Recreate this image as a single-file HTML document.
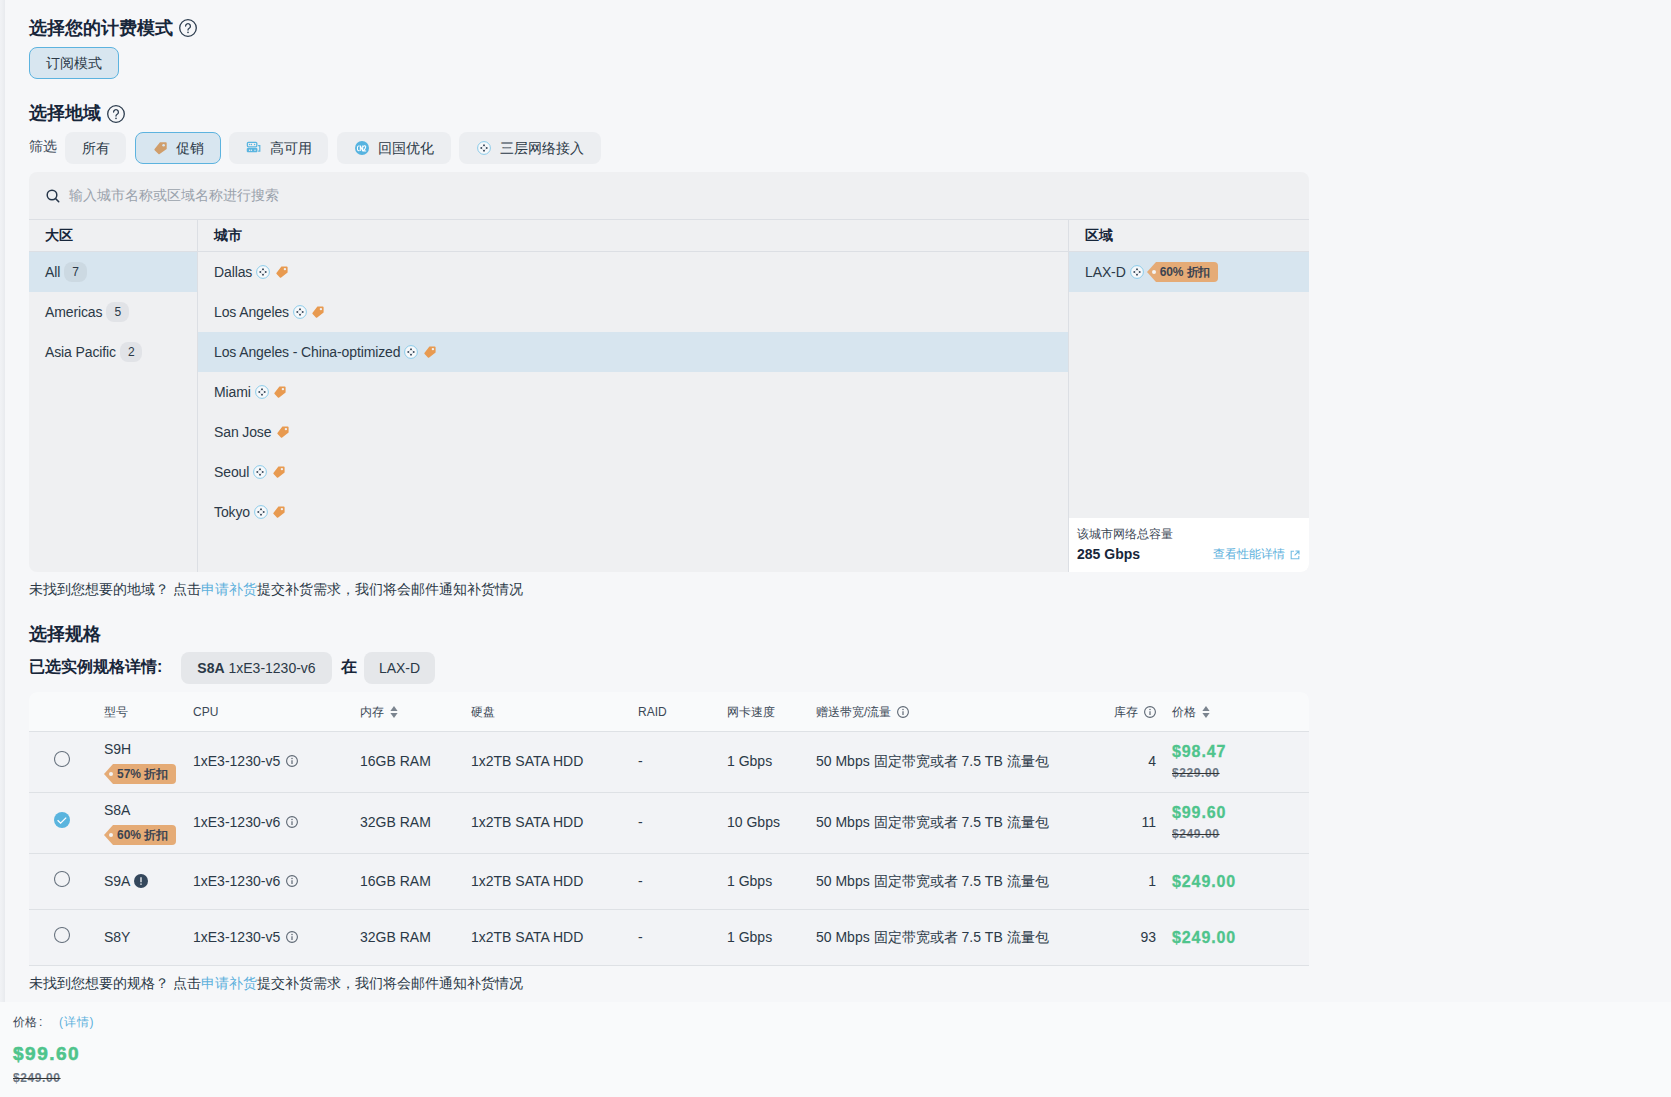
<!DOCTYPE html>
<html><head><meta charset="utf-8">
<style>
*{box-sizing:border-box;margin:0;padding:0}
html,body{width:1671px;height:1097px;overflow:hidden}
body{background:#f6f7f9;font-family:"Liberation Sans",sans-serif;color:#2b3947;position:relative;font-size:14px}
.abs{position:absolute}
.strip{left:0;top:0;width:5px;height:1002px;background:linear-gradient(to right,#f1f2f5,#eef0f3 40%,#e8eaee)}
.h{font-size:18px;font-weight:bold;color:#17263a;line-height:24px;white-space:nowrap}
.help{display:inline-block;vertical-align:top}
.btn{position:absolute;height:32px;border-radius:8px;background:#eceef1;line-height:32px;font-size:14px;color:#2b3947;white-space:nowrap}
.btn.sel{background:#d8e6f0;border:1px solid #5cb3df;line-height:30px}
.btn svg{position:absolute}
.panel{left:29px;top:172px;width:1280px;height:400px;background:#eff0f2;border-radius:8px;overflow:hidden}
.row{position:absolute;height:40px;line-height:40px;white-space:nowrap;letter-spacing:-.12px}
.sel-bg{background:#d7e5ef}
.badge{display:inline-block;height:20px;line-height:20px;border-radius:8px;background:#e1e3e7;padding:0 8px;font-size:12px;vertical-align:middle;margin-left:4px;position:relative;top:-1px}
.sel-bg .badge{background:#ccd9e2}
.hd{font-size:14px;font-weight:bold;line-height:20px;color:#17263a}
.row .ni{vertical-align:middle;margin-left:4px;position:relative;top:-1px}
.row .ti{vertical-align:middle;margin-left:5.5px;position:relative;top:-1px}
.dtag{display:inline-block;position:relative;height:20px;line-height:20px;background:#e5ab76;color:#3b4350;font-size:12px;font-weight:bold;padding:0 8px 0 4px;border-radius:0 4px 4px 0;margin-left:12px;vertical-align:middle;top:-1px}
.dtag:before{content:"";position:absolute;left:-9px;top:0;border-right:9px solid #e5ab76;border-top:10px solid transparent;border-bottom:10px solid transparent}
.dtag:after{content:"";position:absolute;left:-4px;top:8px;width:4px;height:4px;border-radius:50%;background:#f4f4f4}
.foot{font-size:14px;line-height:20px;color:#2b3947;white-space:nowrap}
.lnk{color:#5cb0dc}
.chip{height:32px;line-height:32px;border-radius:8px;background:#e5e7ea;text-align:center;font-size:14px;color:#2b3947;white-space:nowrap}
.chip b{color:#2b3947}
.tbl{left:29px;top:692px;width:1280px;height:274px;background:#f2f3f6;border-radius:8px 8px 0 0;overflow:hidden}
.th{top:10px;font-size:12px;line-height:20px;color:#3b4856;white-space:nowrap}
.th svg{vertical-align:middle;margin-left:6px;position:relative;top:-1px}
.cell{font-size:14px;line-height:20px;color:#2b3947;white-space:nowrap}
.cell .ii{vertical-align:middle;margin-left:6px;position:relative;top:-1px}
.cell .ei{vertical-align:middle;margin-left:4px;position:relative;top:-1px}
.price{font-size:16px;font-weight:bold;line-height:20px;color:#4fc48c;white-space:nowrap;letter-spacing:.9px;-webkit-text-stroke:.3px #4fc48c}
.old{font-size:12px;font-weight:bold;line-height:16px;color:#6b7683;text-decoration:line-through;text-decoration-color:#333;white-space:nowrap;letter-spacing:.6px}
.bar{left:0;top:1002px;width:1671px;height:95px;background:#f9fafb}
</style></head><body>
<div class="abs strip"></div>

<div class="abs h" style="left:29px;top:16px">选择您的计费模式</div>
<svg class="abs" style="left:179px;top:19px" width="18" height="18" viewBox="0 0 18 18"><circle cx="9" cy="9" r="8.3" fill="none" stroke="#2c3c4e" stroke-width="1.3"/><path d="M6.6 7.1a2.4 2.4 0 1 1 3.6 2.1c-.8.5-1.2.9-1.2 1.9" fill="none" stroke="#2c3c4e" stroke-width="1.3" stroke-linecap="round"/><circle cx="9" cy="13.4" r=".8" fill="#2c3c4e"/></svg>
<div class="btn sel" style="left:29px;top:47px;width:90px;text-align:center">订阅模式</div>

<div class="abs h" style="left:29px;top:101px">选择地域</div>
<svg class="abs" style="left:107px;top:105px" width="18" height="18" viewBox="0 0 18 18"><circle cx="9" cy="9" r="8.3" fill="none" stroke="#2c3c4e" stroke-width="1.3"/><path d="M6.6 7.1a2.4 2.4 0 1 1 3.6 2.1c-.8.5-1.2.9-1.2 1.9" fill="none" stroke="#2c3c4e" stroke-width="1.3" stroke-linecap="round"/><circle cx="9" cy="13.4" r=".8" fill="#2c3c4e"/></svg>

<div class="abs" style="left:29px;top:136px;line-height:20px;font-size:14px;color:#3a4756">筛选</div>
<div class="btn" style="left:65px;top:132px;width:61px;text-align:center">所有</div>
<div class="btn sel" style="left:135px;top:132px;width:86px;padding-left:40px">促销
<svg style="left:18px;top:9px" width="13" height="13" viewBox="0 0 13 13"><path d="M6 .3h5.9c.5 0 .8.3.8.8v5.9L5.6 12.1c-.3.3-.8.3-1.1 0L.6 8.2c-.3-.3-.3-.8 0-1.1z" fill="#d09e6b"/><circle cx="9.6" cy="3.2" r="1.3" fill="#d8e6f0"/></svg></div>
<div class="btn" style="left:229px;top:132px;width:99px;padding-left:41px">高可用
<svg style="left:17px;top:9px" width="15" height="13" viewBox="0 0 15 13"><rect x="1.4" y="1.3" width="9.4" height="4.5" rx="1" fill="none" stroke="#5ab5e0" stroke-width="1.3"/><circle cx="3.6" cy="3.55" r=".7" fill="#5ab5e0"/><circle cx="5.4" cy="3.55" r=".7" fill="#5ab5e0"/><circle cx="8.6" cy="3.55" r=".7" fill="#5ab5e0"/><rect x=".75" y="7.1" width="10.7" height="4.2" rx="1" fill="#5ab5e0"/><circle cx="3.6" cy="9.2" r=".7" fill="#eceef1"/><circle cx="5.4" cy="9.2" r=".7" fill="#eceef1"/><circle cx="9" cy="9.2" r=".7" fill="#eceef1"/><path d="M12.1 4.6h1.7v5.6h-1.7" fill="none" stroke="#5ab5e0" stroke-width="1.2"/></svg></div>
<div class="btn" style="left:337px;top:132px;width:114px;padding-left:41px">回国优化
<svg style="left:18px;top:9px" width="14" height="14" viewBox="0 0 14 14"><circle cx="7" cy="7" r="7" fill="#56b3e0"/><path d="M4.4 5.1Q2.4 4.3 2.4 7.3Q2.4 10.3 4.4 9.5M5.3 10V4.6L7.7 10V4.6M8.5 5.6Q9.5 4.2 10.6 5.2Q11.3 6.2 8.5 9.9H11.2" fill="none" stroke="#fff" stroke-width="1.05"/></svg></div>
<div class="btn" style="left:459px;top:132px;width:142px;padding-left:41px">三层网络接入
<svg style="left:18px;top:9px" width="14" height="14" viewBox="0 0 14 14"><circle cx="7" cy="7" r="6.4" fill="#f6f8fa" stroke="#8acbea" stroke-width="1"/><path d="M7 4.3L9.7 7 7 9.7 4.3 7z" fill="none" stroke="#aab2bc" stroke-width=".5"/><rect x="6.2" y="3.5" width="1.6" height="1.6" fill="#27384d"/><rect x="6.2" y="8.9" width="1.6" height="1.6" fill="#27384d"/><rect x="3.5" y="6.2" width="1.6" height="1.6" fill="#27384d"/><rect x="8.9" y="6.2" width="1.6" height="1.6" fill="#27384d"/></svg></div>

<div class="abs panel">
<svg class="abs" style="left:17px;top:17px" width="14" height="14" viewBox="0 0 14 14"><circle cx="6" cy="6" r="4.8" fill="none" stroke="#26364a" stroke-width="1.5"/><path d="M9.5 9.5l3.2 3.2" stroke="#26364a" stroke-width="1.6" stroke-linecap="round"/></svg>
<div class="abs" style="left:40px;top:13px;line-height:20px;font-size:14px;color:#9aa2ac">输入城市名称或区域名称进行搜索</div>
<div class="abs" style="left:0;top:47px;width:1280px;height:1px;background:#dcdfe4"></div>
<div class="abs" style="left:168px;top:48px;width:1px;height:352px;background:#dcdfe4"></div>
<div class="abs" style="left:1039px;top:48px;width:1px;height:352px;background:#dcdfe4"></div>
<div class="abs" style="left:0;top:79px;width:1280px;height:1px;background:#dcdfe4"></div>
<div class="abs hd" style="left:16px;top:53px">大区</div>
<div class="abs hd" style="left:185px;top:53px">城市</div>
<div class="abs hd" style="left:1056px;top:53px">区域</div>
<div class="row sel-bg" style="left:0;top:80px;width:168px;padding-left:16px">All<span class="badge">7</span></div>
<div class="row" style="left:0;top:120px;width:168px;padding-left:16px">Americas<span class="badge">5</span></div>
<div class="row" style="left:0;top:160px;width:168px;padding-left:16px">Asia Pacific<span class="badge">2</span></div>
<div class="row" style="left:169px;top:80px;width:870px;padding-left:16px">Dallas<svg class="ni" width="14" height="14" viewBox="0 0 14 14"><circle cx="7" cy="7" r="6.4" fill="#f6f8fa" stroke="#8acbea" stroke-width="1"/><path d="M7 4.3L9.7 7 7 9.7 4.3 7z" fill="none" stroke="#aab2bc" stroke-width=".5"/><rect x="6.2" y="3.5" width="1.6" height="1.6" fill="#27384d"/><rect x="6.2" y="8.9" width="1.6" height="1.6" fill="#27384d"/><rect x="3.5" y="6.2" width="1.6" height="1.6" fill="#27384d"/><rect x="8.9" y="6.2" width="1.6" height="1.6" fill="#27384d"/></svg><svg class="ti" width="12" height="12" viewBox="0 0 12 12"><path d="M5.4.4h5.3c.5 0 .9.4.9.9v5.3L5.2 11.4c-.4.4-.9.4-1.3 0L.6 8.1c-.4-.4-.4-.9 0-1.3z" fill="#e89a50"/><circle cx="8.9" cy="3.1" r="1.2" fill="#eff0f2"/></svg></div>
<div class="row" style="left:169px;top:120px;width:870px;padding-left:16px">Los Angeles<svg class="ni" width="14" height="14" viewBox="0 0 14 14"><circle cx="7" cy="7" r="6.4" fill="#f6f8fa" stroke="#8acbea" stroke-width="1"/><path d="M7 4.3L9.7 7 7 9.7 4.3 7z" fill="none" stroke="#aab2bc" stroke-width=".5"/><rect x="6.2" y="3.5" width="1.6" height="1.6" fill="#27384d"/><rect x="6.2" y="8.9" width="1.6" height="1.6" fill="#27384d"/><rect x="3.5" y="6.2" width="1.6" height="1.6" fill="#27384d"/><rect x="8.9" y="6.2" width="1.6" height="1.6" fill="#27384d"/></svg><svg class="ti" width="12" height="12" viewBox="0 0 12 12"><path d="M5.4.4h5.3c.5 0 .9.4.9.9v5.3L5.2 11.4c-.4.4-.9.4-1.3 0L.6 8.1c-.4-.4-.4-.9 0-1.3z" fill="#e89a50"/><circle cx="8.9" cy="3.1" r="1.2" fill="#eff0f2"/></svg></div>
<div class="row sel-bg" style="left:169px;top:160px;width:870px;padding-left:16px">Los Angeles - China-optimized<svg class="ni" width="14" height="14" viewBox="0 0 14 14"><circle cx="7" cy="7" r="6.4" fill="#f6f8fa" stroke="#8acbea" stroke-width="1"/><path d="M7 4.3L9.7 7 7 9.7 4.3 7z" fill="none" stroke="#aab2bc" stroke-width=".5"/><rect x="6.2" y="3.5" width="1.6" height="1.6" fill="#27384d"/><rect x="6.2" y="8.9" width="1.6" height="1.6" fill="#27384d"/><rect x="3.5" y="6.2" width="1.6" height="1.6" fill="#27384d"/><rect x="8.9" y="6.2" width="1.6" height="1.6" fill="#27384d"/></svg><svg class="ti" width="12" height="12" viewBox="0 0 12 12"><path d="M5.4.4h5.3c.5 0 .9.4.9.9v5.3L5.2 11.4c-.4.4-.9.4-1.3 0L.6 8.1c-.4-.4-.4-.9 0-1.3z" fill="#e89a50"/><circle cx="8.9" cy="3.1" r="1.2" fill="#eff0f2"/></svg></div>
<div class="row" style="left:169px;top:200px;width:870px;padding-left:16px">Miami<svg class="ni" width="14" height="14" viewBox="0 0 14 14"><circle cx="7" cy="7" r="6.4" fill="#f6f8fa" stroke="#8acbea" stroke-width="1"/><path d="M7 4.3L9.7 7 7 9.7 4.3 7z" fill="none" stroke="#aab2bc" stroke-width=".5"/><rect x="6.2" y="3.5" width="1.6" height="1.6" fill="#27384d"/><rect x="6.2" y="8.9" width="1.6" height="1.6" fill="#27384d"/><rect x="3.5" y="6.2" width="1.6" height="1.6" fill="#27384d"/><rect x="8.9" y="6.2" width="1.6" height="1.6" fill="#27384d"/></svg><svg class="ti" width="12" height="12" viewBox="0 0 12 12"><path d="M5.4.4h5.3c.5 0 .9.4.9.9v5.3L5.2 11.4c-.4.4-.9.4-1.3 0L.6 8.1c-.4-.4-.4-.9 0-1.3z" fill="#e89a50"/><circle cx="8.9" cy="3.1" r="1.2" fill="#eff0f2"/></svg></div>
<div class="row" style="left:169px;top:240px;width:870px;padding-left:16px">San Jose<svg class="ti" width="12" height="12" viewBox="0 0 12 12"><path d="M5.4.4h5.3c.5 0 .9.4.9.9v5.3L5.2 11.4c-.4.4-.9.4-1.3 0L.6 8.1c-.4-.4-.4-.9 0-1.3z" fill="#e89a50"/><circle cx="8.9" cy="3.1" r="1.2" fill="#eff0f2"/></svg></div>
<div class="row" style="left:169px;top:280px;width:870px;padding-left:16px">Seoul<svg class="ni" width="14" height="14" viewBox="0 0 14 14"><circle cx="7" cy="7" r="6.4" fill="#f6f8fa" stroke="#8acbea" stroke-width="1"/><path d="M7 4.3L9.7 7 7 9.7 4.3 7z" fill="none" stroke="#aab2bc" stroke-width=".5"/><rect x="6.2" y="3.5" width="1.6" height="1.6" fill="#27384d"/><rect x="6.2" y="8.9" width="1.6" height="1.6" fill="#27384d"/><rect x="3.5" y="6.2" width="1.6" height="1.6" fill="#27384d"/><rect x="8.9" y="6.2" width="1.6" height="1.6" fill="#27384d"/></svg><svg class="ti" width="12" height="12" viewBox="0 0 12 12"><path d="M5.4.4h5.3c.5 0 .9.4.9.9v5.3L5.2 11.4c-.4.4-.9.4-1.3 0L.6 8.1c-.4-.4-.4-.9 0-1.3z" fill="#e89a50"/><circle cx="8.9" cy="3.1" r="1.2" fill="#eff0f2"/></svg></div>
<div class="row" style="left:169px;top:320px;width:870px;padding-left:16px">Tokyo<svg class="ni" width="14" height="14" viewBox="0 0 14 14"><circle cx="7" cy="7" r="6.4" fill="#f6f8fa" stroke="#8acbea" stroke-width="1"/><path d="M7 4.3L9.7 7 7 9.7 4.3 7z" fill="none" stroke="#aab2bc" stroke-width=".5"/><rect x="6.2" y="3.5" width="1.6" height="1.6" fill="#27384d"/><rect x="6.2" y="8.9" width="1.6" height="1.6" fill="#27384d"/><rect x="3.5" y="6.2" width="1.6" height="1.6" fill="#27384d"/><rect x="8.9" y="6.2" width="1.6" height="1.6" fill="#27384d"/></svg><svg class="ti" width="12" height="12" viewBox="0 0 12 12"><path d="M5.4.4h5.3c.5 0 .9.4.9.9v5.3L5.2 11.4c-.4.4-.9.4-1.3 0L.6 8.1c-.4-.4-.4-.9 0-1.3z" fill="#e89a50"/><circle cx="8.9" cy="3.1" r="1.2" fill="#eff0f2"/></svg></div>

<div class="row sel-bg" style="left:1040px;top:80px;width:240px;padding-left:16px">LAX-D<svg class="ni" width="14" height="14" viewBox="0 0 14 14"><circle cx="7" cy="7" r="6.4" fill="#f6f8fa" stroke="#8acbea" stroke-width="1"/><path d="M7 4.3L9.7 7 7 9.7 4.3 7z" fill="none" stroke="#aab2bc" stroke-width=".5"/><rect x="6.2" y="3.5" width="1.6" height="1.6" fill="#27384d"/><rect x="6.2" y="8.9" width="1.6" height="1.6" fill="#27384d"/><rect x="3.5" y="6.2" width="1.6" height="1.6" fill="#27384d"/><rect x="8.9" y="6.2" width="1.6" height="1.6" fill="#27384d"/></svg><span class="dtag">60% 折扣</span></div>
<div class="abs" style="left:1040px;top:346px;width:240px;height:54px;background:#fff">
<div class="abs" style="left:8px;top:8px;font-size:12px;line-height:16px;color:#3a4654">该城市网络总容量</div>
<div class="abs" style="left:8px;top:27px;font-size:14px;font-weight:bold;line-height:18px;color:#17263a">285 Gbps</div>
<div class="abs" style="left:144px;top:28px;font-size:12px;line-height:16px;color:#5cb0dc;white-space:nowrap">查看性能详情</div>
<svg class="abs" style="left:221px;top:32px" width="10" height="10" viewBox="0 0 10 10"><path d="M4 1.2H1.2v7.6h7.6V6" fill="none" stroke="#74bde3" stroke-width="1.1"/><path d="M5.5 1h3.5v3.5M9 1L4.6 5.4" fill="none" stroke="#74bde3" stroke-width="1.1"/></svg>
</div>
</div>


<div class="abs foot" style="left:29px;top:579px">未找到您想要的地域？ 点击<span class="lnk">申请补货</span>提交补货需求，我们将会邮件通知补货情况</div>
<div class="abs h" style="left:29px;top:622px">选择规格</div>
<div class="abs" style="left:29px;top:655px;font-size:16px;font-weight:bold;line-height:24px;color:#17263a">已选实例规格详情:</div>
<div class="abs chip" style="left:181px;top:652px;width:151px"><b>S8A</b> 1xE3-1230-v6</div>
<div class="abs" style="left:341px;top:655px;font-size:16px;font-weight:bold;line-height:24px;color:#17263a">在</div>
<div class="abs chip" style="left:364px;top:652px;width:71px">LAX-D</div>
<div class="abs tbl">
<div class="abs" style="left:0;top:0;width:1280px;height:39px;background:#f9fafb"></div>
<div class="abs" style="left:0;top:39px;width:1280px;height:1px;background:#dee1e5"></div>
<div class="abs th" style="left:75px">型号</div>
<div class="abs th" style="left:164px">CPU</div>
<div class="abs th" style="left:331px">内存<svg class="si" width="8" height="14" viewBox="0 0 8 14"><path d="M4 1L7.6 6H.4z" fill="#7b848f"/><path d="M4 13L7.6 8H.4z" fill="#7b848f"/></svg></div>
<div class="abs th" style="left:442px">硬盘</div>
<div class="abs th" style="left:609px">RAID</div>
<div class="abs th" style="left:698px">网卡速度</div>
<div class="abs th" style="left:787px">赠送带宽/流量<svg class="ii" width="12" height="12" viewBox="0 0 12 12"><circle cx="6" cy="6" r="5.4" fill="none" stroke="#5d6773" stroke-width="1.1"/><circle cx="6" cy="3.6" r=".75" fill="#5d6773"/><path d="M6 5.2v3.8" stroke="#5d6773" stroke-width="1.2"/></svg></div>
<div class="abs th" style="left:1085px">库存<svg class="ii" width="12" height="12" viewBox="0 0 12 12"><circle cx="6" cy="6" r="5.4" fill="none" stroke="#5d6773" stroke-width="1.1"/><circle cx="6" cy="3.6" r=".75" fill="#5d6773"/><path d="M6 5.2v3.8" stroke="#5d6773" stroke-width="1.2"/></svg></div>
<div class="abs th" style="left:1143px">价格<svg class="si" width="8" height="14" viewBox="0 0 8 14"><path d="M4 1L7.6 6H.4z" fill="#7b848f"/><path d="M4 13L7.6 8H.4z" fill="#7b848f"/></svg></div>
<svg class="abs" style="left:25px;top:59px" width="16" height="16" viewBox="0 0 16 16"><circle cx="8" cy="8" r="7.5" fill="none" stroke="#6d7783" stroke-width="1.1"/></svg><div class="abs cell" style="left:75px;top:47px">S9H</div><div class="abs" style="left:72px;top:73px"><span class="dtag">57% 折扣</span></div><div class="abs cell" style="left:164px;top:59.0px">1xE3-1230-v5<svg class="ii" width="12" height="12" viewBox="0 0 12 12"><circle cx="6" cy="6" r="5.4" fill="none" stroke="#5d6773" stroke-width="1.1"/><circle cx="6" cy="3.6" r=".75" fill="#5d6773"/><path d="M6 5.2v3.8" stroke="#5d6773" stroke-width="1.2"/></svg></div><div class="abs cell" style="left:331px;top:59.0px">16GB RAM</div><div class="abs cell" style="left:442px;top:59.0px">1x2TB SATA HDD</div><div class="abs cell" style="left:609px;top:59.0px">-</div><div class="abs cell" style="left:698px;top:59.0px">1 Gbps</div><div class="abs cell" style="left:787px;top:59.0px">50 Mbps 固定带宽或者 7.5 TB 流量包</div><div class="abs cell" style="left:1027px;top:59.0px;width:100px;text-align:right">4</div><div class="abs price" style="left:1143px;top:49.5px">$98.47</div><div class="abs old" style="left:1143px;top:73.0px">$229.00</div><div class="abs" style="left:0;top:100px;width:1280px;height:1px;background:#dee1e5"></div>
<svg class="abs" style="left:25px;top:120px" width="16" height="16" viewBox="0 0 16 16"><circle cx="8" cy="8" r="8" fill="#5ab4de"/><path d="M3.6 8.2l3 3 5.6-5.6" fill="none" stroke="#fff" stroke-width="1.3"/></svg><div class="abs cell" style="left:75px;top:108px">S8A</div><div class="abs" style="left:72px;top:134px"><span class="dtag">60% 折扣</span></div><div class="abs cell" style="left:164px;top:120.0px">1xE3-1230-v6<svg class="ii" width="12" height="12" viewBox="0 0 12 12"><circle cx="6" cy="6" r="5.4" fill="none" stroke="#5d6773" stroke-width="1.1"/><circle cx="6" cy="3.6" r=".75" fill="#5d6773"/><path d="M6 5.2v3.8" stroke="#5d6773" stroke-width="1.2"/></svg></div><div class="abs cell" style="left:331px;top:120.0px">32GB RAM</div><div class="abs cell" style="left:442px;top:120.0px">1x2TB SATA HDD</div><div class="abs cell" style="left:609px;top:120.0px">-</div><div class="abs cell" style="left:698px;top:120.0px">10 Gbps</div><div class="abs cell" style="left:787px;top:120.0px">50 Mbps 固定带宽或者 7.5 TB 流量包</div><div class="abs cell" style="left:1027px;top:120.0px;width:100px;text-align:right">11</div><div class="abs price" style="left:1143px;top:110.5px">$99.60</div><div class="abs old" style="left:1143px;top:134.0px">$249.00</div><div class="abs" style="left:0;top:161px;width:1280px;height:1px;background:#dee1e5"></div>
<svg class="abs" style="left:25px;top:179px" width="16" height="16" viewBox="0 0 16 16"><circle cx="8" cy="8" r="7.5" fill="none" stroke="#6d7783" stroke-width="1.1"/></svg><div class="abs cell" style="left:75px;top:178.5px">S9A<svg class="ei" width="14" height="14" viewBox="0 0 14 14"><circle cx="7" cy="7" r="7" fill="#34475c"/><path d="M7 3.2v5" stroke="#c9ced4" stroke-width="1.7"/><rect x="6.2" y="9.4" width="1.6" height="1.5" fill="#c9ced4"/></svg></div><div class="abs cell" style="left:164px;top:178.5px">1xE3-1230-v6<svg class="ii" width="12" height="12" viewBox="0 0 12 12"><circle cx="6" cy="6" r="5.4" fill="none" stroke="#5d6773" stroke-width="1.1"/><circle cx="6" cy="3.6" r=".75" fill="#5d6773"/><path d="M6 5.2v3.8" stroke="#5d6773" stroke-width="1.2"/></svg></div><div class="abs cell" style="left:331px;top:178.5px">16GB RAM</div><div class="abs cell" style="left:442px;top:178.5px">1x2TB SATA HDD</div><div class="abs cell" style="left:609px;top:178.5px">-</div><div class="abs cell" style="left:698px;top:178.5px">1 Gbps</div><div class="abs cell" style="left:787px;top:178.5px">50 Mbps 固定带宽或者 7.5 TB 流量包</div><div class="abs cell" style="left:1027px;top:178.5px;width:100px;text-align:right">1</div><div class="abs price" style="left:1143px;top:179.5px">$249.00</div><div class="abs" style="left:0;top:217px;width:1280px;height:1px;background:#dee1e5"></div>
<svg class="abs" style="left:25px;top:235px" width="16" height="16" viewBox="0 0 16 16"><circle cx="8" cy="8" r="7.5" fill="none" stroke="#6d7783" stroke-width="1.1"/></svg><div class="abs cell" style="left:75px;top:234.5px">S8Y</div><div class="abs cell" style="left:164px;top:234.5px">1xE3-1230-v5<svg class="ii" width="12" height="12" viewBox="0 0 12 12"><circle cx="6" cy="6" r="5.4" fill="none" stroke="#5d6773" stroke-width="1.1"/><circle cx="6" cy="3.6" r=".75" fill="#5d6773"/><path d="M6 5.2v3.8" stroke="#5d6773" stroke-width="1.2"/></svg></div><div class="abs cell" style="left:331px;top:234.5px">32GB RAM</div><div class="abs cell" style="left:442px;top:234.5px">1x2TB SATA HDD</div><div class="abs cell" style="left:609px;top:234.5px">-</div><div class="abs cell" style="left:698px;top:234.5px">1 Gbps</div><div class="abs cell" style="left:787px;top:234.5px">50 Mbps 固定带宽或者 7.5 TB 流量包</div><div class="abs cell" style="left:1027px;top:234.5px;width:100px;text-align:right">93</div><div class="abs price" style="left:1143px;top:235.5px">$249.00</div><div class="abs" style="left:0;top:273px;width:1280px;height:1px;background:#dee1e5"></div>

</div>
<div class="abs foot" style="left:29px;top:973px">未找到您想要的规格？ 点击<span class="lnk">申请补货</span>提交补货需求，我们将会邮件通知补货情况</div>
<div class="abs bar">
<div class="abs" style="left:13px;top:12px;font-size:12px;line-height:16px;color:#3a4654">价格<span style="margin-left:2px">:</span></div>
<div class="abs" style="left:59px;top:12px;font-size:12px;line-height:16px;color:#5cb0dc;letter-spacing:.8px">(详情)</div>
<div class="abs" style="left:13px;top:40px;font-size:19px;font-weight:bold;line-height:24px;color:#4fc48c;letter-spacing:1.5px;-webkit-text-stroke:.6px #4fc48c">$99.60</div>
<div class="abs old" style="left:13px;top:68px">$249.00</div>
</div>
</body></html>
